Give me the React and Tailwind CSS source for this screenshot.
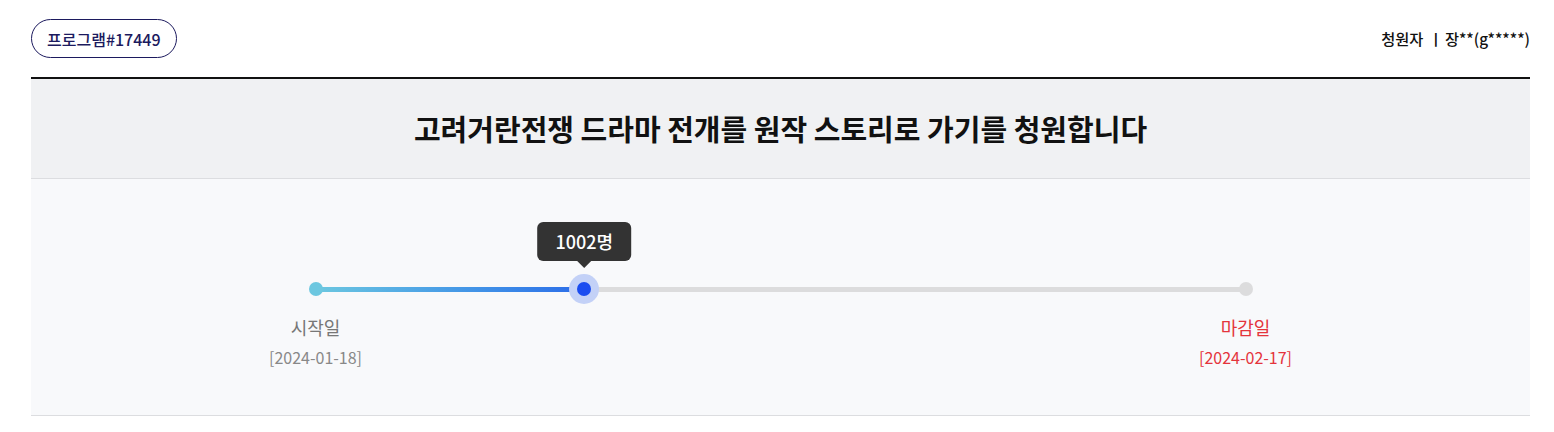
export default function App() {
  const progress = 28.9;

  return (
    <div className="min-h-screen bg-white pl-[31px] pr-[24px] font-['Noto_Sans_CJK_KR','Noto_Sans',sans-serif] text-[#111]">
      <div className="flex items-center justify-between py-[19px]">
        <span className="inline-flex h-[39px] items-center rounded-full border border-[#1c1a5e] px-[15px] text-[16px] font-medium text-[#1c1a5e]">
          프로그램#17449
        </span>
        <div className="text-[15.3px] font-medium text-[#111]">
          청원자 <span className="mx-[2px]">ㅣ</span>장**(g*****)
        </div>
      </div>

      <div className="border-t-2 border-[#111]">
        <div className="flex h-[100px] items-center justify-center border-b border-[#dcdde0] bg-[#f0f1f3]">
          <h1 className="text-[29px] font-bold text-[#111]">
            고려거란전쟁 드라마 전개를 원작 스토리로 가기를 청원합니다
          </h1>
        </div>

        <div className="border-b border-[#dcdde0] bg-[#f8f9fb] pb-[47px] pt-[95px]">
          <div className="mx-auto w-[930px]">
            <div className="relative h-[30px]">
              <div className="absolute left-0 right-0 top-[12.5px] h-[5px] rounded-full bg-[#dcdcdd]" />
              <div
                className="absolute left-0 top-[12.5px] h-[5px] rounded-full bg-gradient-to-r from-[#6cc7e0] to-[#2d6ce8]"
                style={{ width: `${progress}%` }}
              />
              <div className="absolute left-[-7px] top-[8px] h-[14px] w-[14px] rounded-full bg-[#6cc7e0]" />
              <div className="absolute right-[-7px] top-[8px] h-[14px] w-[14px] rounded-full bg-[#dcdcdd]" />
              <div
                className="absolute top-0 h-[30px] w-[30px] -translate-x-1/2 rounded-full bg-[#c3d1f7]"
                style={{ left: `${progress}%` }}
              >
                <div className="absolute left-[8px] top-[8px] h-[14px] w-[14px] rounded-full bg-[#1a4cf0]" />
                <div className="absolute bottom-[36px] left-1/2 -translate-x-1/2">
                  <div className="flex h-[39px] items-center whitespace-nowrap rounded-[6px] bg-[#333] px-[18px] text-[18px] font-medium text-white">
                    1002명
                  </div>
                  <div className="mx-auto h-0 w-0 border-x-[7px] border-t-[7px] border-x-transparent border-t-[#333]" />
                </div>
              </div>
            </div>
          </div>

          <div className="mx-auto mt-[11px] flex w-[1030px] justify-between">
            <div className="flex w-[100px] flex-col items-center gap-[7px]">
              <span className="text-[18px] leading-[24px] text-[#777]">시작일</span>
              <span className="text-[16px] leading-[22px] text-[#888]">[2024-01-18]</span>
            </div>
            <div className="flex w-[100px] flex-col items-center gap-[7px]">
              <span className="text-[18px] leading-[24px] text-[#e4343c]">마감일</span>
              <span className="text-[16px] leading-[22px] text-[#e4343c]">[2024-02-17]</span>
            </div>
          </div>
        </div>
      </div>
    </div>
  );
}
